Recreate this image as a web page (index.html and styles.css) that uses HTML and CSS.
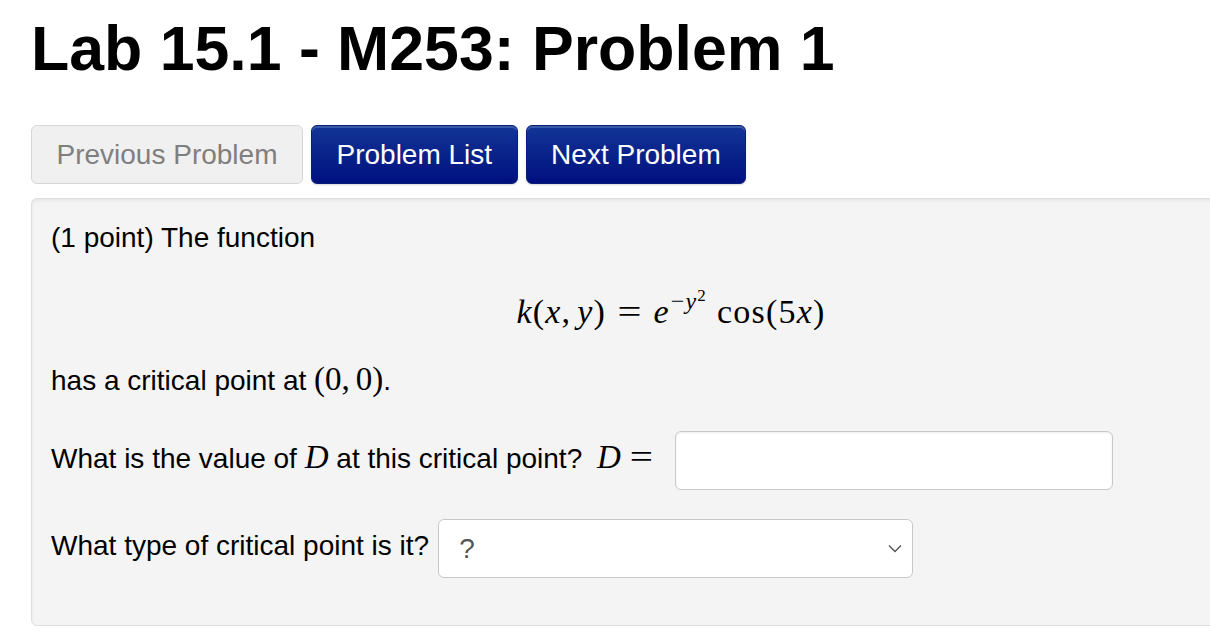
FILE: index.html
```html
<!DOCTYPE html>
<html>
<head>
    <title>Lab 15.1 - M253: Problem 1</title>
    <link rel="stylesheet" href="styles.css">
</head>
<body>

<div class="page">
    <h1 class="problem-title">Lab 15.1 - M253: Problem 1</h1>

    <!-- Navigation -->
    <div class="nav-buttons">
        <button class="nav-btn nav-btn-disabled" disabled>Previous Problem</button>
        <button class="nav-btn">Problem List</button>
        <button class="nav-btn">Next Problem</button>
    </div>

    <!-- Problem body -->
    <div class="problem-well">
        <p class="problem-line">(1 point) The function</p>

        <div class="display-math"><span class="mi">k</span><span class="mo">(</span><span class="mi">x</span><span class="mo comma">,</span><span class="mi">y</span><span class="mo">)</span><span class="mo rel">=</span><span class="mi">e</span><sup class="msup"><span class="mo">&minus;</span><span class="mi">y</span><sup class="msup2">2</sup></sup><span class="mo fn">cos</span><span class="mo">(</span><span class="mo">5</span><span class="mi">x</span><span class="mo">)</span></div>

        <p class="problem-line">has a critical point at <span class="inline-math"><span class="mo">(</span><span class="mo">0</span><span class="mo comma">,</span><span class="mo">0</span><span class="mo">)</span></span>.</p>

        <div class="answer-row row-input">
            <span class="answer-label">What is the value of <span class="inline-math"><span class="mi">D</span></span> at this critical point? <span class="inline-math"><span class="mi var-d">D</span><span class="mo rel">=</span></span></span>
            <input class="answer-input" type="text">
        </div>

        <div class="answer-row row-select">
            <span class="answer-label">What type of critical point is it?</span>
            <span class="select-wrap">
                <select class="answer-select">
                    <option>?</option>
                    <option>local maximum</option>
                    <option>local minimum</option>
                    <option>saddle point</option>
                </select>
                <svg class="select-arrow" width="14" height="9" viewBox="0 0 14 9"><path d="M1 1.5 L7 7.5 L13 1.5" fill="none" stroke="#555" stroke-width="1.4"/></svg>
            </span>
        </div>
    </div>
</div>

</body>
</html>
```

FILE: styles.css
```css
html, body {
    margin: 0;
    padding: 0;
    background: #fff;
    overflow: hidden;
}

.page {
    padding-left: 31px;
    font-family: "Liberation Sans", Arial, sans-serif;
    font-size: 28px;
    color: #000;
}

.problem-title {
    margin: 13px 0 0 0;
    font-size: 62.6px;
    line-height: 70px;
    font-weight: bold;
}

.nav-buttons {
    display: flex;
    gap: 8px;
    margin-top: 42px;
}

.nav-btn {
    height: 59px;
    padding: 0 24.5px;
    border: 1px solid #0a1f7a;
    border-radius: 6px;
    background: linear-gradient(#123596, #00107f);
    box-shadow: inset 0 2px 0 rgba(255,255,255,0.18), 0 1px 2px rgba(0,0,0,0.15);
    color: #fff;
    font-family: "Liberation Sans", Arial, sans-serif;
    font-size: 28px;
    cursor: pointer;
}

.nav-btn-disabled {
    background: #f0f0f0;
    border-color: #d6d6d6;
    box-shadow: none;
    color: #7f7f7f;
    cursor: default;
}

.problem-well {
    width: 1281px;
    box-sizing: border-box;
    margin-top: 14px;
    padding: 19px 20px 47px 19px;
    background: #f4f4f4;
    border: 1px solid #dedede;
    border-radius: 6px;
    box-shadow: inset 0 2px 3px rgba(0,0,0,0.06);
    line-height: 40px;
}

.problem-line {
    margin: 0;
}

.display-math {
    margin: 34px 0 27px 0;
    text-align: center;
    font-family: "Liberation Serif", "DejaVu Serif", serif;
    font-size: 34px;
    line-height: 40px;
    letter-spacing: 1.2px;
}

.inline-math {
    font-family: "Liberation Serif", "DejaVu Serif", serif;
    font-size: 33px;
}

.mi {
    font-style: italic;
}

.comma {
    margin-right: 6px;
}

.rel {
    margin: 0 13px 0 14px;
    display: inline-block;
    transform: scaleX(1.25);
}

.fn {
    margin-left: 10px;
}

.msup {
    font-size: 24px;
    vertical-align: 14px;
    line-height: 0;
    margin-left: 1px;
}

.msup2 {
    font-size: 17px;
    vertical-align: 8px;
    font-style: normal;
}

.answer-row {
    display: flex;
    align-items: center;
}

.answer-label {
    margin-bottom: 6px;
}

.row-input {
    margin-top: 30px;
    gap: 19px;
}

.var-d {
    margin-left: 7px;
}

.row-input .rel {
    margin: 0 6px 0 11px;
}

.row-select {
    margin-top: 29px;
    gap: 9px;
}

.answer-input {
    width: 438px;
    height: 59px;
    box-sizing: border-box;
    border: 1px solid #c8c8c8;
    border-radius: 6px;
    background: #fff;
    box-shadow: inset 0 1px 2px rgba(0,0,0,0.08);
    font-size: 28px;
}

.select-wrap {
    position: relative;
    display: inline-block;
}

.answer-select {
    appearance: none;
    -webkit-appearance: none;
    width: 475px;
    height: 59px;
    box-sizing: border-box;
    padding: 0 20px;
    border: 1px solid #c8c8c8;
    border-radius: 6px;
    background: #fff;
    color: #555;
    font-family: "Liberation Sans", Arial, sans-serif;
    font-size: 28px;
}

.select-arrow {
    position: absolute;
    right: 11px;
    top: 25px;
    pointer-events: none;
}
```
